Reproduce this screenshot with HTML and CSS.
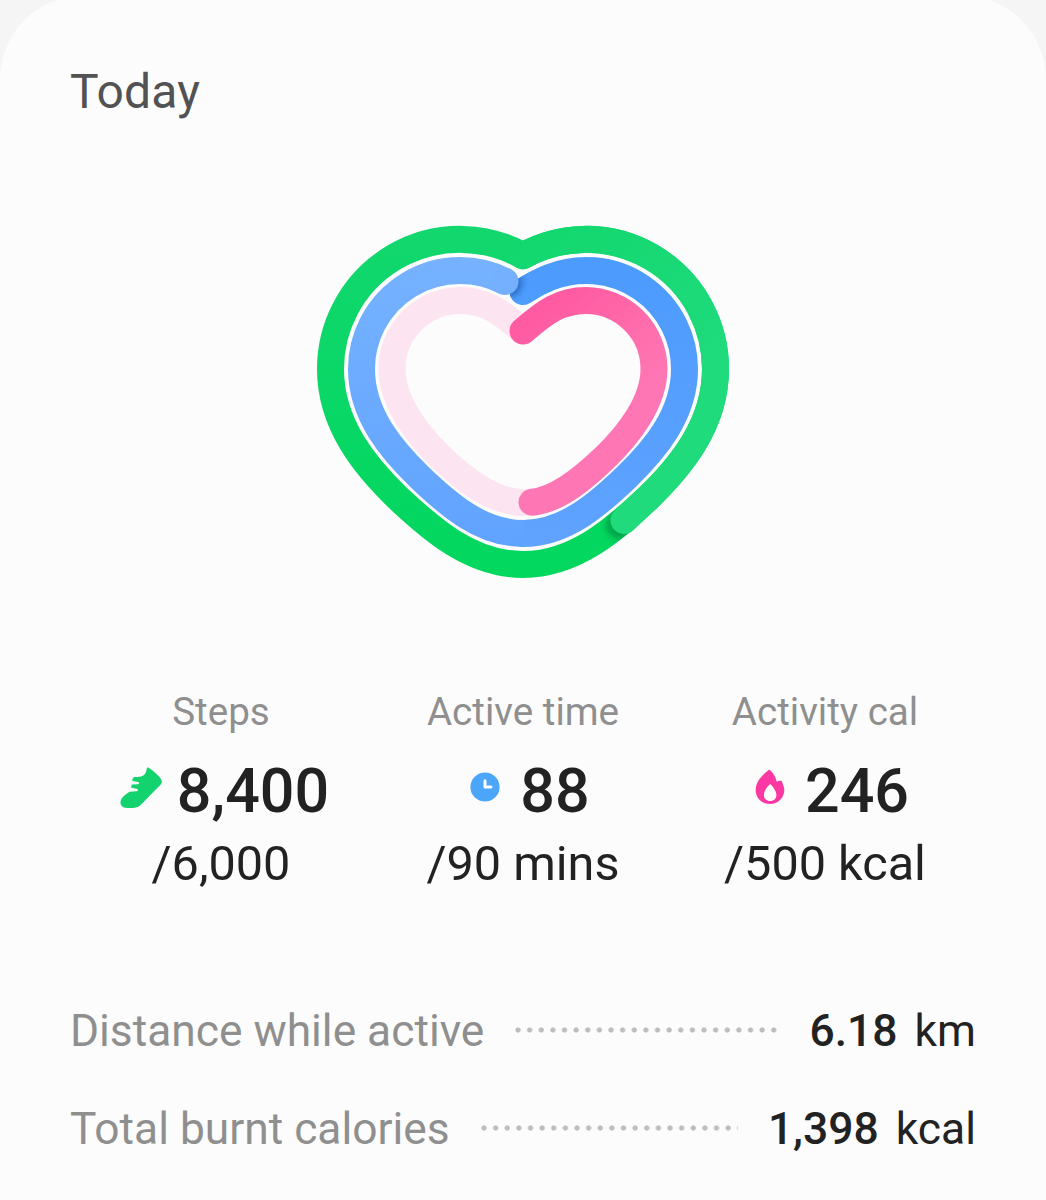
FILE: index.html
```
<!DOCTYPE html>
<html lang="en">
<head>
<meta charset="utf-8">
<title>Daily activity</title>
<link rel="stylesheet" href="styles.css">
</head>
<body>
<div class="card">
    <h1 class="title">Today</h1>

    <svg class="heart" width="430" height="370" viewBox="308 216 430 370" fill="none">
        <defs>
            <linearGradient id="greenBase" gradientUnits="userSpaceOnUse" x1="0" y1="226" x2="0" y2="578">
                <stop offset="0" stop-color="#12d76e"/>
                <stop offset="0.75" stop-color="#05d762"/>
                <stop offset="1" stop-color="#02d75e"/>
            </linearGradient>
            <linearGradient id="greenTop" gradientUnits="userSpaceOnUse" x1="523" y1="240" x2="690" y2="400">
                <stop offset="0" stop-color="#12d76e"/>
                <stop offset="1" stop-color="#1fdb7c"/>
            </linearGradient>
            <linearGradient id="blueRight" gradientUnits="userSpaceOnUse" x1="0" y1="256" x2="0" y2="547">
                <stop offset="0" stop-color="#4b9bfd"/>
                <stop offset="1" stop-color="#60a3ff"/>
            </linearGradient>
            <linearGradient id="blueLeft" gradientUnits="userSpaceOnUse" x1="0" y1="256" x2="0" y2="547">
                <stop offset="0" stop-color="#76b2ff"/>
                <stop offset="1" stop-color="#60a3ff"/>
            </linearGradient>
            <linearGradient id="pink" gradientUnits="userSpaceOnUse" x1="515" y1="335" x2="590" y2="430">
                <stop offset="0" stop-color="#ff5ba2"/>
                <stop offset="0.6" stop-color="#ff6dac"/>
                <stop offset="1" stop-color="#ff76b4"/>
            </linearGradient>
            <filter id="soft" x="-50%" y="-50%" width="200%" height="200%"><feGaussianBlur stdDeviation="3"/></filter>
            <mask id="greenMask" maskUnits="userSpaceOnUse" x="308" y="216" width="430" height="370">
                <path class="ring" stroke="#fff" d="M715.5 369C715.5 425 680 467 648 498C615 529 575 564.5 523 564.5"/>
            </mask>
            <mask id="blueMask" maskUnits="userSpaceOnUse" x="308" y="216" width="430" height="370">
                <path class="ring" stroke="#fff" d="M523 291.5Q536 282.8 550 277.3A98.5 98.5 0 0 1 684.5 369"/>
            </mask>
        </defs>

        <!-- steps -->
        <path class="ring" stroke="url(#greenBase)" d="M523 255.7A129.5 129.5 0 0 1 715.5 369C715.5 425 680 467 648 498C615 529 575 564.5 523 564.5C471 564.5 431 529 398 498C366 467 330.5 425 330.5 369A129.5 129.5 0 0 1 523 255.7"/>
        <g mask="url(#greenMask)"><circle cx="620" cy="525" r="14" fill="#007a38" opacity="0.55" filter="url(#soft)"/></g>
        <path class="ring" stroke="url(#greenTop)" d="M523 255.7A129.5 129.5 0 0 1 715.5 369C715.5 425 680 467 648 498Q635 510 624 520.5"/>

        <!-- active time -->
        <path class="ring" stroke="url(#blueRight)" d="M523 291.5Q536 282.8 550 277.3A98.5 98.5 0 0 1 684.5 369C684.5 415 654 450 627 476.5C600 502.500 566 533.5 523 533.5"/>
        <g mask="url(#blueMask)"><circle cx="508" cy="283" r="14" fill="#16509f" opacity="0.6" filter="url(#soft)"/></g>
        <path class="ring butt" stroke="url(#blueLeft)" d="M523.5 533.5C480 533.5 446 502.500 419 476.5C392 450 361.5 415 361.5 369A98.5 98.5 0 0 1 505 281.4"/>
        <circle cx="505" cy="281.4" r="13.5" fill="#74b0fe"/>

        <!-- activity calories -->
        <path class="ring" stroke="#fce5f0" d="M523 331C501 312 486 300.5 460 300.5A68.5 68.5 0 0 0 392 369C392 403 419 436 439 455.5C459 475 491 502.5 523 502.5"/>
        <path class="ring" stroke="url(#pink)" d="M523 331C545 312 560 300.5 586 300.5A68.5 68.5 0 0 1 654 369C654 403 627 436 607 455.5C587 475 559 500 532 502.2"/>
    </svg>

    <div class="stats">
        <div class="stat">
            <div class="label">Steps</div>
            <div class="value">
                <svg class="icon" viewBox="1 0 42 42">
                    <path fill="#12d36e" d="M28.3 .6C27.6 .2 26.9 .5 26.8 1.3C26.5 5 25 8.6 21 9.6C18.5 10.2 16 9.9 14.1 9.9C12.8 10.5 12.1 12.4 12.4 14L18.2 15C19.6 15.5 19.3 17.2 17.9 17.2L11.8 17.6L11 20.6L17.1 22C18.5 22.5 18 24.2 16.6 24.2L9.7 24.8C6 27.3 2.4 29.5 1 32.8C-.5 36.7 1.2 40.2 5.4 40.8C9.8 41.2 15.3 41.2 18.3 39.7C20.3 38.6 21.7 36.9 23.3 35.3L41 17.2C42.2 15.7 42.1 13.6 40.8 11.8C38.3 8.3 34 4.3 28.3 .6Z"/>
                </svg>
                <span>8,400</span>
            </div>
            <div class="goal">/6,000</div>
        </div>
        <div class="stat">
            <div class="label">Active time</div>
            <div class="value">
                <svg class="icon" viewBox="0 0 42 42">
                    <circle cx="21" cy="20" r="14.6" fill="#4ba5f8"/>
                    <path d="M21 13.7V20H27" fill="none" stroke="#fff" stroke-width="3" stroke-linecap="round" stroke-linejoin="round"/>
                </svg>
                <span>88</span>
            </div>
            <div class="goal">/90 mins</div>
        </div>
        <div class="stat">
            <div class="label">Activity cal</div>
            <div class="value">
                <svg class="icon" viewBox="0 0 42 42">
                    <path fill="#fd38a3" d="M19.3 3.2C20 2.6 20.7 2.7 21.3 3.3C24.6 6.7 26.6 10 27.7 14.5C29.2 14.3 30.4 13.9 31.4 13.8C32.7 13.7 33.1 14.4 33.3 15.5C34 18 35.3 19.8 35.3 23C35.3 31 29 37 20.9 37C13 37 6.7 31 6.7 23.2C6.7 14.5 13 8.5 19.3 3.2Z"/>
                    <path fill="#fff" d="M20.3 17.8C21 17.1 21.7 17.1 22.3 17.9C24.6 20.8 27.4 24 27.4 28C27.4 31.8 24.8 34 21.2 34C17.5 34 14.9 31.6 14.9 28C14.9 24 17.6 20.6 20.3 17.8Z"/>
                </svg>
                <span>246</span>
            </div>
            <div class="goal">/500 kcal</div>
        </div>
    </div>

    <div class="details">
        <div class="row">
            <span class="name">Distance while active</span>
            <span class="dots"></span>
            <span class="amount"><b>6.18</b> km</span>
        </div>
        <div class="row">
            <span class="name">Total burnt calories</span>
            <span class="dots"></span>
            <span class="amount"><b>1,398</b> kcal</span>
        </div>
    </div>
</div>
</body>
</html>
```
FILE: styles.css
```
*{
    box-sizing: border-box;
}
body{
    margin: 0;
    height: 1200px;
    overflow: hidden;
    background: #f5f5f5;
    font-family: Roboto, "Liberation Sans", sans-serif;
    color: #222;
}
.card{
    height: 1203px;
    margin-top: -3px;
    padding: 67px 70px 0;
    background: #fcfcfc;
    border-radius: 78px 78px 0 0 / 84px 84px 0 0;
}
.title{
    margin: 0;
    font-size: 48px;
    line-height: 56px;
    font-weight: 400;
    letter-spacing: 0.2px;
    color: #525252;
}
.heart{
    display: block;
    margin: 96px auto 0;
}
.ring{
    stroke-width: 27px;
    stroke-linecap: round;
}
.butt{
    stroke-linecap: butt;
}
.stats{
    display: grid;
    grid-template-columns: repeat(3, 302px);
    margin-top: 103px;
    text-align: center;
}
.label{
    font-size: 38.6px;
    line-height: 46px;
    color: #8f8f8f;
}
.value{
    display: flex;
    justify-content: center;
    align-items: center;
    gap: 14px;
    margin-top: 20px;
    padding-left: 8px;
    font-size: 61px;
    line-height: 72px;
    font-weight: 500;
}
.icon{
    width: 42px;
    height: 42px;
    margin-bottom: 6px;
    overflow: visible;
}
.goal{
    margin-top: 9px;
    font-size: 48.6px;
    line-height: 56px;
}
.details{
    margin-top: 113px;
}
.row{
    display: flex;
    align-items: center;
    height: 52px;
    margin-bottom: 46px;
    font-size: 44.4px;
    line-height: 52px;
    white-space: nowrap;
}
.name{
    font-size: 44.3px;
    color: #8f8f8f;
}
.dots{
    flex: 1;
    height: 6px;
    margin: 0 30px 2px 31px;
    background: radial-gradient(circle at 3px 3px, #bdbdbd 2.2px, transparent 3px) 0 0 / 11.64px 6px repeat-x;
}
.amount{
    word-spacing: 6px;
}
.amount b{
    font-weight: 500;
}
```
